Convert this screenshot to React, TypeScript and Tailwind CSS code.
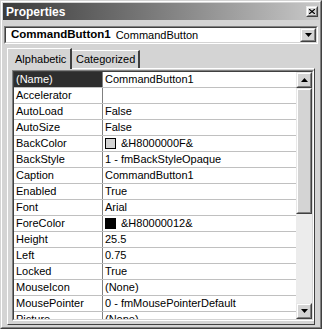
import React from 'react';

type Row = { name: string; value: string; swatch?: string; selected?: boolean };

const rows: Row[] = [
    { name: '(Name)', value: 'CommandButton1', selected: true },
    { name: 'Accelerator', value: '' },
    { name: 'AutoLoad', value: 'False' },
    { name: 'AutoSize', value: 'False' },
    { name: 'BackColor', value: '&H8000000F&', swatch: '#d4d4d4' },
    { name: 'BackStyle', value: '1 - fmBackStyleOpaque' },
    { name: 'Caption', value: 'CommandButton1' },
    { name: 'Enabled', value: 'True' },
    { name: 'Font', value: 'Arial' },
    { name: 'ForeColor', value: '&H80000012&', swatch: '#000000' },
    { name: 'Height', value: '25.5' },
    { name: 'Left', value: '0.75' },
    { name: 'Locked', value: 'True' },
    { name: 'MouseIcon', value: '(None)' },
    { name: 'MousePointer', value: '0 - fmMousePointerDefault' },
    { name: 'Picture', value: '(None)' },
];

// raised 3D button face, like Win9x controls
const Raised: React.FC<{ className?: string; children?: React.ReactNode }> = ({ className = '', children }) => (
    <div className={`border border-t-[#e8e8e8] border-l-[#e8e8e8] border-r-[#404040] border-b-[#404040] ${className}`}>
        <div className="w-full h-full border border-t-white border-l-white border-r-[#808080] border-b-[#808080] bg-[#d4d4d4] flex items-center justify-center">
            {children}
        </div>
    </div>
);

const Arrow: React.FC<{ up?: boolean }> = ({ up }) => (
    <svg width="7" height="4" viewBox="0 0 7 4">
        {up ? <polygon points="3.5,0 7,4 0,4" fill="#000" /> : <polygon points="0,0 7,0 3.5,4" fill="#000" />}
    </svg>
);

export default function App() {
    return (
        <div
            className="w-[322px] h-[329px] bg-[#d4d4d4] border border-t-[#d4d4d4] border-l-[#d4d4d4] border-r-[#404040] border-b-[#404040] text-black"
            style={{ fontFamily: '"Liberation Sans", Arial, sans-serif' }}
        >
            <div className="w-full h-full border border-t-white border-l-white border-r-[#808080] border-b-[#808080] p-[1px] flex flex-col">
                {/* Title bar */}
                <div className="h-[17px] shrink-0 flex items-center justify-between pl-[3px] pr-[1px] bg-gradient-to-r from-[#3c3c3c] to-[#c8c8c8]">
                    <span className="text-white font-bold text-[12px] leading-none">Properties</span>
                    <Raised className="w-[12px] h-[11px]">
                        <svg width="6" height="5" viewBox="0 0 6 5">
                            <path d="M0 0L6 5M6 0L0 5" stroke="#000" strokeWidth="1.2" />
                        </svg>
                    </Raised>
                </div>

                {/* Object combo */}
                <div className="mt-[6px] mx-[1px] h-[18px] shrink-0 border border-t-[#808080] border-l-[#808080] border-r-white border-b-white">
                    <div className="h-full border border-t-[#404040] border-l-[#404040] border-r-[#d4d4d4] border-b-[#d4d4d4] bg-white flex items-center">
                        <span className="pl-[5px] text-[11.5px] font-bold leading-none">CommandButton1</span>
                        <span className="pl-[5px] text-[11px] leading-none">CommandButton</span>
                        <div className="flex-1" />
                        <Raised className="w-[16px] h-[14px]">
                            <Arrow />
                        </Raised>
                    </div>
                </div>

                {/* Tabs */}
                <div className="mt-[4px] px-[4px] flex-1 flex flex-col min-h-0">
                    <div className="flex items-end h-[20px] shrink-0">
                        <div className="relative z-10 mb-[-1px] w-[65px] h-[21px] bg-[#d4d4d4] border-t border-l border-t-white border-l-white border-r-2 border-r-[#404040] flex items-center pl-[7px] text-[11px]">
                            Alphabetic
                        </div>
                        <div className="w-[68px] h-[18px] bg-[#d4d4d4] border-t border-t-white border-r-2 border-r-[#404040] flex items-center pl-[4px] text-[11px]">
                            Categorized
                        </div>
                    </div>

                    {/* Tab panel */}
                    <div className="flex-1 min-h-0 border border-t-white border-l-white border-r-[#404040] border-b-[#404040] pt-[1px] pl-[4px] flex flex-col">
                        {/* Grid */}
                        <div className="flex-1 min-h-0 border border-t-[#808080] border-l-[#808080] border-r-white border-b-white">
                            <div className="h-full border border-t-[#404040] border-l-[#404040] border-r-[#d4d4d4] border-b-[#d4d4d4] flex overflow-hidden">
                                <div className="flex-1 bg-white overflow-hidden">
                                    {rows.map((r) => (
                                        <div key={r.name} className="flex h-[16px] border-b border-b-[#c0c0c0] text-[11px]">
                                            <div
                                                className={`w-[89px] shrink-0 pl-[2px] flex items-center border-r border-r-[#808080] ${
                                                    r.selected ? 'bg-[#2e2e2e] text-white' : ''
                                                }`}
                                            >
                                                {r.name}
                                            </div>
                                            <div className="flex-1 flex items-center pl-[2px] whitespace-nowrap">
                                                {r.swatch && (
                                                    <span
                                                        className="w-[11px] h-[11px] border border-black mr-[5px] shrink-0"
                                                        style={{ background: r.swatch }}
                                                    />
                                                )}
                                                {r.value}
                                            </div>
                                        </div>
                                    ))}
                                </div>
                                {/* Scrollbar */}
                                <div className="w-[16px] shrink-0 flex flex-col bg-[#ececec]">
                                    <Raised className="w-[16px] h-[16px] shrink-0">
                                        <Arrow up />
                                    </Raised>
                                    <Raised className="w-[16px] h-[126px] shrink-0" />
                                    <div className="flex-1" />
                                    <Raised className="w-[16px] h-[16px] shrink-0">
                                        <Arrow />
                                    </Raised>
                                </div>
                            </div>
                        </div>
                        <div className="h-[3px] shrink-0" />
                    </div>
                </div>
                <div className="h-[1px] shrink-0" />
            </div>
        </div>
    );
}
